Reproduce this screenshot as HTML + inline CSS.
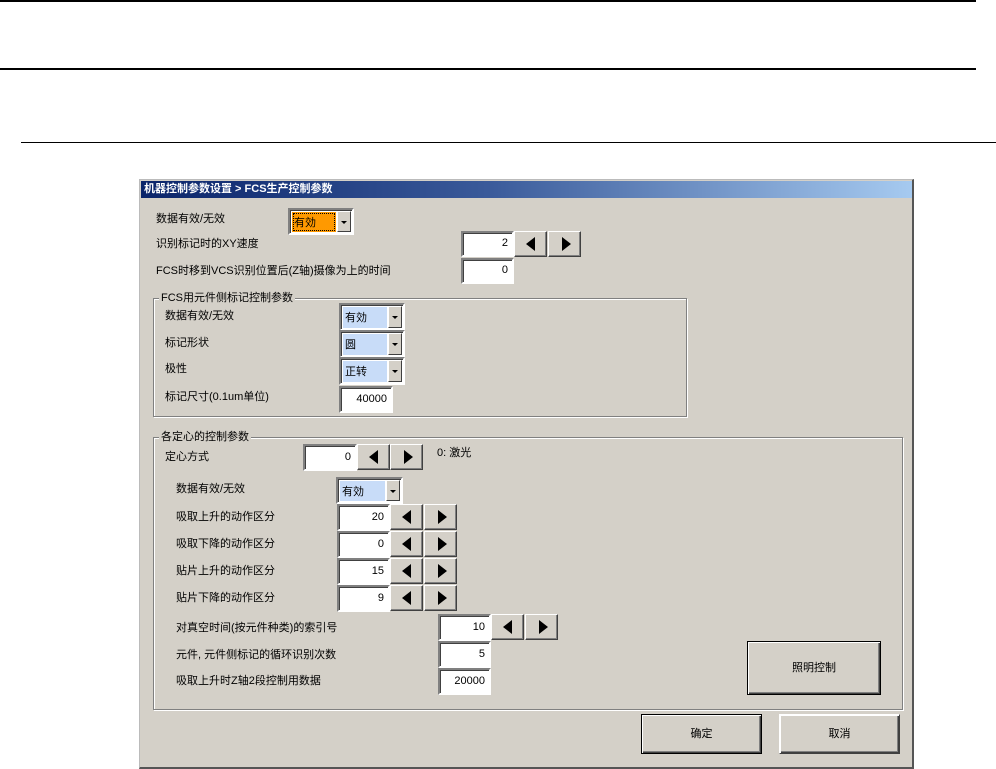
<!DOCTYPE html>
<html><head><meta charset="utf-8"><style>
*{margin:0;padding:0;box-sizing:border-box}
body{width:996px;height:769px;background:#fff;position:relative;overflow:hidden;font-family:"Liberation Sans","Noto Sans CJK SC","WenQuanYi Zen Hei",sans-serif;font-size:11px;color:#000}
.a{position:absolute}
.l{position:absolute;white-space:nowrap;font-size:11px;line-height:12px}
.win{position:absolute;left:139px;top:179px;width:775px;height:590px;background:#d4d0c8;border:1px solid #bbb;border-right:2px solid #555;border-bottom:2px solid #555}
.tb{position:absolute;left:141px;top:181px;width:771px;height:17px;background:linear-gradient(90deg,#0a246a,#3a5a9a 45%,#a6caf0);color:#fff;font-weight:bold;font-size:11px;line-height:17px;padding-left:3px;white-space:nowrap}
.inp{position:absolute;background:#fff;border:2px solid;border-color:#808080 #fff #fff #808080;box-shadow:inset 1px 1px 0 #404040;text-align:right;padding-right:4px;font-size:11px}
.btn{position:absolute;background:#d4d0c8;border:1px solid;border-color:#fff #404040 #404040 #fff;box-shadow:inset -1px -1px 0 #808080}
.bl:after,.br:after{content:"";position:absolute;left:50%;top:50%;margin-top:-7px;border-top:7px solid transparent;border-bottom:7px solid transparent}
.bl:after{margin-left:-5px;border-right:9px solid #000}
.br:after{margin-left:-3px;border-left:9px solid #000}
.cb{position:absolute;border:2px solid;border-color:#808080 #fff #fff #808080;box-shadow:inset 1px 1px 0 #404040;background:#fff}
.cb .f{position:absolute;left:2px;top:2px;bottom:1px;right:16px;background:#c8dcf8;font-size:11px;padding-left:2px}
.cb .d{position:absolute;right:1px;top:1px;bottom:1px;width:14px;background:#d4d0c8;border:1px solid;border-color:#fff #404040 #404040 #fff}
.cb .d:after{content:"";position:absolute;left:3px;top:9px;border-left:3px solid transparent;border-right:3px solid transparent;border-top:3px solid #000}
.grp{position:absolute;border:1px solid #808080;box-shadow:1px 1px 0 #fff,inset 1px 1px 0 #fff}
.gt{position:absolute;background:#d4d0c8;padding:0 2px;font-size:11px;line-height:12px;white-space:nowrap}
.pb{position:absolute;background:#d4d0c8;border:1px solid #000;box-shadow:inset 1px 1px 0 #fff,inset -1px -1px 0 #404040,inset -2px -2px 0 #808080;text-align:center;font-size:11px}
</style></head><body>
<div class="a" style="left:0;top:0;width:976px;height:2px;background:#000"></div>
<div class="a" style="left:0;top:68px;width:976px;height:2px;background:#000"></div>
<div class="a" style="left:21px;top:142px;width:975px;height:1px;background:#000"></div>

<div class="win"></div>
<div class="tb">机器控制参数设置 &gt; FCS生产控制参数</div>

<div class="l" style="left:156px;top:213px">数据有效/无效</div>
<div class="cb" style="left:288px;top:208px;width:66px;height:27px"><div class="f" style="background:#ff9900;outline:1px dotted #000;outline-offset:-2px;line-height:22px">有効</div><div class="d"></div></div>
<div class="l" style="left:156px;top:238px">识别标记时的XY速度</div>
<div class="inp" style="left:461px;top:231px;width:53px;height:26px;line-height:21px">2</div>
<div class="btn bl" style="left:514px;top:231px;width:33px;height:26px"></div>
<div class="btn br" style="left:548px;top:231px;width:33px;height:26px"></div>
<div class="l" style="left:156px;top:265px">FCS时移到VCS识别位置后(Z轴)摄像为上的时间</div>
<div class="inp" style="left:461px;top:258px;width:53px;height:26px;line-height:21px">0</div>

<div class="grp" style="left:153px;top:298px;width:534px;height:119px"></div>
<div class="gt" style="left:159px;top:292px">FCS用元件侧标记控制参数</div>
<div class="l" style="left:165px;top:310px">数据有效/无效</div>
<div class="cb" style="left:339px;top:303px;width:66px;height:28px"><div class="f" style="line-height:23px">有効</div><div class="d"></div></div>
<div class="l" style="left:165px;top:337px">标记形状</div>
<div class="cb" style="left:339px;top:330px;width:66px;height:28px"><div class="f" style="line-height:23px">圆</div><div class="d"></div></div>
<div class="l" style="left:165px;top:363px">极性</div>
<div class="cb" style="left:339px;top:357px;width:66px;height:28px"><div class="f" style="line-height:23px">正转</div><div class="d"></div></div>
<div class="l" style="left:165px;top:391px">标记尺寸(0.1um单位)</div>
<div class="inp" style="left:339px;top:386px;width:54px;height:27px;line-height:22px">40000</div>

<div class="grp" style="left:153px;top:437px;width:750px;height:273px"></div>
<div class="gt" style="left:159px;top:431px">各定心的控制参数</div>
<div class="l" style="left:165px;top:451px">定心方式</div>
<div class="inp" style="left:303px;top:444px;width:54px;height:27px;line-height:22px">0</div>
<div class="btn bl" style="left:357px;top:444px;width:33px;height:26px"></div>
<div class="btn br" style="left:390px;top:444px;width:33px;height:26px"></div>
<div class="l" style="left:437px;top:447px">0: 激光</div>

<div class="l" style="left:176px;top:483px">数据有效/无效</div>
<div class="cb" style="left:336px;top:477px;width:67px;height:27px"><div class="f" style="line-height:22px">有効</div><div class="d"></div></div>

<div class="l" style="left:176px;top:511px">吸取上升的动作区分</div>
<div class="inp" style="left:337px;top:504px;width:53px;height:27px;line-height:22px">20</div>
<div class="btn bl" style="left:390px;top:504px;width:33px;height:26px"></div>
<div class="btn br" style="left:424px;top:504px;width:33px;height:26px"></div>
<div class="l" style="left:176px;top:538px">吸取下降的动作区分</div>
<div class="inp" style="left:337px;top:531px;width:53px;height:27px;line-height:22px">0</div>
<div class="btn bl" style="left:390px;top:531px;width:33px;height:26px"></div>
<div class="btn br" style="left:424px;top:531px;width:33px;height:26px"></div>
<div class="l" style="left:176px;top:565px">贴片上升的动作区分</div>
<div class="inp" style="left:337px;top:558px;width:53px;height:27px;line-height:22px">15</div>
<div class="btn bl" style="left:390px;top:558px;width:33px;height:26px"></div>
<div class="btn br" style="left:424px;top:558px;width:33px;height:26px"></div>
<div class="l" style="left:176px;top:592px">贴片下降的动作区分</div>
<div class="inp" style="left:337px;top:585px;width:53px;height:27px;line-height:22px">9</div>
<div class="btn bl" style="left:390px;top:585px;width:33px;height:26px"></div>
<div class="btn br" style="left:424px;top:585px;width:33px;height:26px"></div>

<div class="l" style="left:176px;top:622px">对真空时间(按元件种类)的索引号</div>
<div class="inp" style="left:438px;top:614px;width:53px;height:27px;line-height:22px">10</div>
<div class="btn bl" style="left:491px;top:614px;width:33px;height:26px"></div>
<div class="btn br" style="left:525px;top:614px;width:33px;height:26px"></div>
<div class="l" style="left:176px;top:649px">元件, 元件侧标记的循环识别次数</div>
<div class="inp" style="left:438px;top:641px;width:53px;height:27px;line-height:22px">5</div>
<div class="l" style="left:176px;top:675px">吸取上升时Z轴2段控制用数据</div>
<div class="inp" style="left:438px;top:668px;width:53px;height:27px;line-height:22px">20000</div>

<div class="pb" style="left:747px;top:641px;width:134px;height:54px;line-height:52px">照明控制</div>
<div class="pb" style="left:641px;top:714px;width:121px;height:40px;line-height:38px">确定</div>
<div class="pb" style="left:779px;top:714px;width:121px;height:40px;line-height:38px;border-color:#fff #404040 #404040 #fff">取消</div>
</body></html>
